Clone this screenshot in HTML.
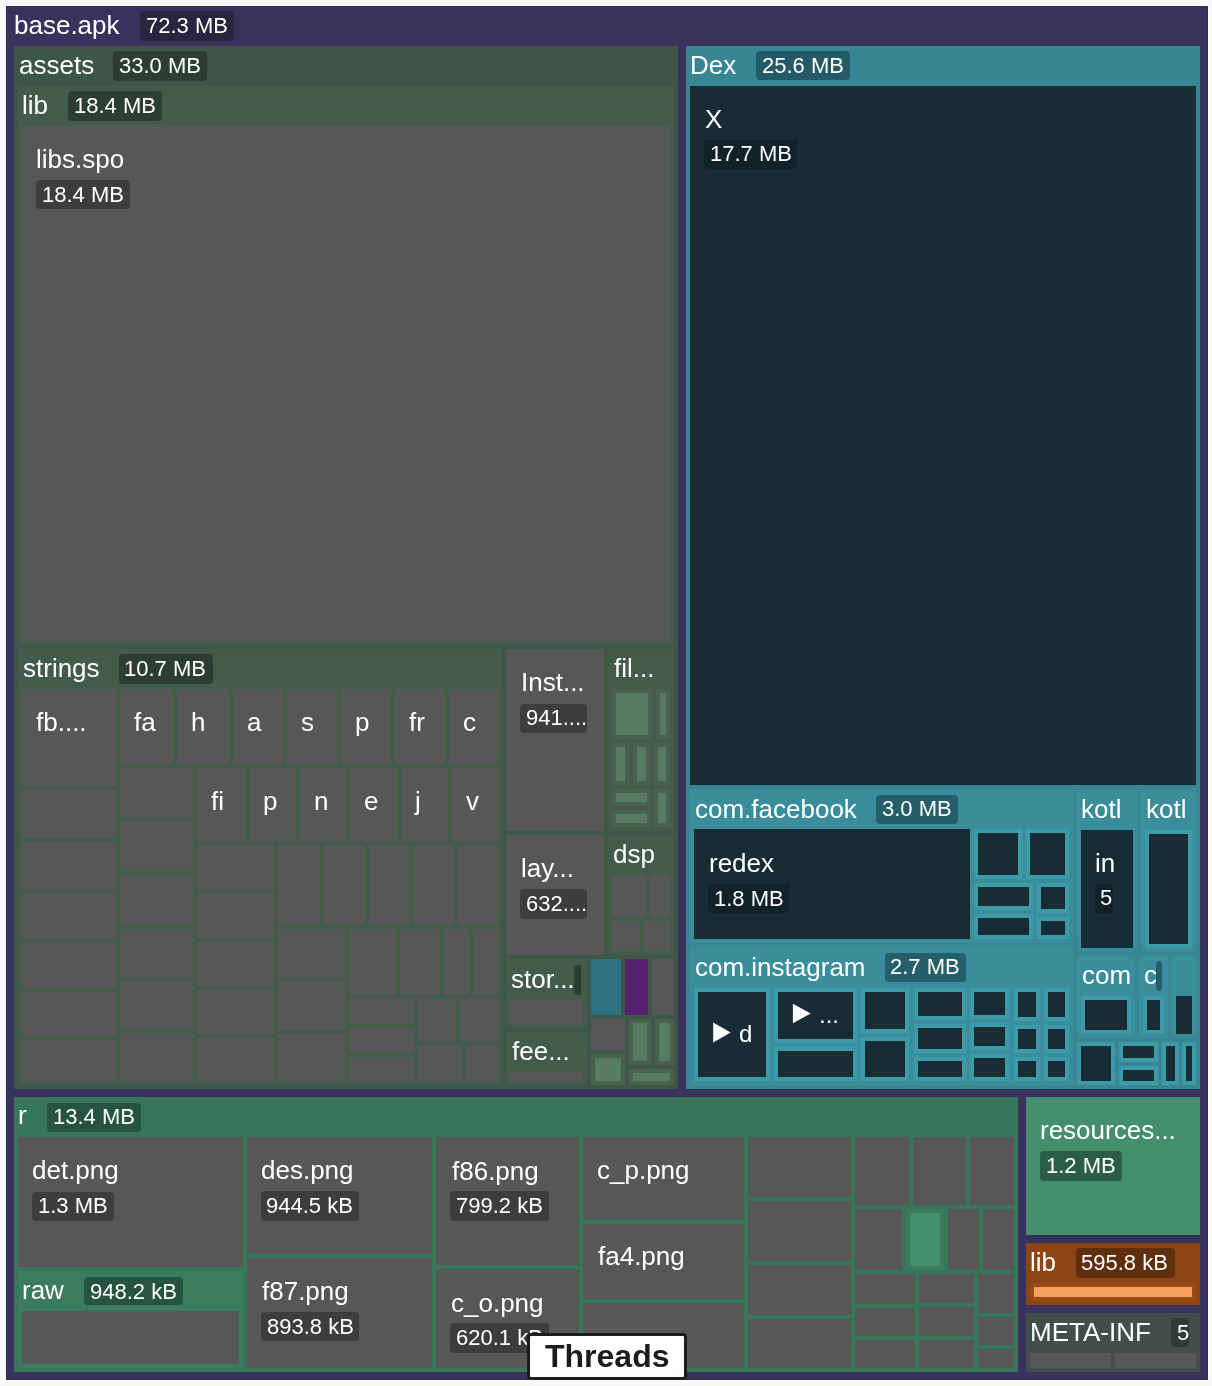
<!DOCTYPE html>
<html><head><meta charset="utf-8"><style>
html,body{margin:0;padding:0;background:#f8f9fb;width:1212px;height:1386px;overflow:hidden}
#c{position:relative;width:1212px;height:1386px}
#c div{position:absolute}
.t{position:absolute;will-change:transform;font-family:"Liberation Sans",sans-serif;color:#fff;line-height:1;white-space:nowrap}
.b{border-radius:4px;overflow:hidden}
.b span{position:absolute;will-change:transform;font-family:"Liberation Sans",sans-serif;font-size:22px;color:#fff;line-height:1;white-space:nowrap}
</style></head><body><div id="c">
<div style="left:5px;top:5px;width:1204px;height:1376px;background:#ffffff;"></div>
<div style="left:6px;top:6px;width:1202px;height:1374px;background:#2d2955;"></div>
<div style="left:7px;top:7px;width:1200px;height:1372px;background:#37335c;"></div>
<span class="t" style="left:13.97px;top:12.20px;font-size:26px">base.apk</span>
<div class="b" style="left:140px;top:11px;width:94px;height:30px;background:#29253f"><span style="left:5.5px;top:3.7px">72.3 MB</span></div>
<div style="left:14px;top:46px;width:664px;height:1043px;background:#3e5647;"></div>
<span class="t" style="left:18.80px;top:52.00px;font-size:26px">assets</span>
<div class="b" style="left:113.4px;top:51.3px;width:93.6px;height:29.4px;background:#2c3d31"><span style="left:5.5px;top:3.7px">33.0 MB</span></div>
<div style="left:18px;top:86px;width:656px;height:559px;background:#435b4b;"></div>
<span class="t" style="left:22.15px;top:91.80px;font-size:26px">lib</span>
<div class="b" style="left:68.4px;top:91.1px;width:93.6px;height:29.5px;background:#2c3d31"><span style="left:5.5px;top:3.7px">18.4 MB</span></div>
<div style="left:22px;top:126px;width:648px;height:515px;background:#575757;"></div>
<span class="t" style="left:36.05px;top:145.50px;font-size:26px">libs.spo</span>
<div class="b" style="left:36px;top:180.4px;width:93.9px;height:29.1px;background:#3d3d3d"><span style="left:5.5px;top:3.7px">18.4 MB</span></div>
<div style="left:18px;top:649px;width:484px;height:436px;background:#435b4b;"></div>
<span class="t" style="left:22.58px;top:655.10px;font-size:26px">strings</span>
<div class="b" style="left:118.9px;top:654.4px;width:93.7px;height:29.3px;background:#2c3d31"><span style="left:5.5px;top:3.7px">10.7 MB</span></div>
<div style="left:22px;top:689px;width:94px;height:97px;background:#575757;"></div>
<div style="left:22px;top:790px;width:94px;height:48px;background:#575757;"></div>
<div style="left:22px;top:842px;width:94px;height:47px;background:#575757;"></div>
<div style="left:22px;top:893px;width:94px;height:46px;background:#575757;"></div>
<div style="left:22px;top:943px;width:94px;height:45px;background:#575757;"></div>
<div style="left:22px;top:992px;width:94px;height:44px;background:#575757;"></div>
<div style="left:22px;top:1040px;width:94px;height:41px;background:#575757;"></div>
<span class="t" style="left:36.40px;top:709.00px;font-size:26px">fb....</span>
<div style="left:120px;top:689px;width:53px;height:75px;background:#575757;"></div>
<span class="t" style="left:134.40px;top:709.00px;font-size:26px">fa</span>
<div style="left:177px;top:689px;width:52px;height:75px;background:#575757;"></div>
<span class="t" style="left:191.40px;top:709.00px;font-size:26px">h</span>
<div style="left:233px;top:689px;width:50px;height:75px;background:#575757;"></div>
<span class="t" style="left:247.40px;top:709.00px;font-size:26px">a</span>
<div style="left:287px;top:689px;width:50px;height:75px;background:#575757;"></div>
<span class="t" style="left:301.40px;top:709.00px;font-size:26px">s</span>
<div style="left:341px;top:689px;width:50px;height:75px;background:#575757;"></div>
<span class="t" style="left:355.40px;top:709.00px;font-size:26px">p</span>
<div style="left:395px;top:689px;width:50px;height:75px;background:#575757;"></div>
<span class="t" style="left:409.40px;top:709.00px;font-size:26px">fr</span>
<div style="left:449px;top:689px;width:49px;height:75px;background:#575757;"></div>
<span class="t" style="left:463.40px;top:709.00px;font-size:26px">c</span>
<div style="left:120px;top:768px;width:73px;height:49px;background:#575757;"></div>
<div style="left:120px;top:821px;width:73px;height:50px;background:#575757;"></div>
<div style="left:120px;top:875px;width:73px;height:50px;background:#575757;"></div>
<div style="left:120px;top:929px;width:73px;height:48px;background:#575757;"></div>
<div style="left:120px;top:981px;width:73px;height:48px;background:#575757;"></div>
<div style="left:120px;top:1033px;width:73px;height:48px;background:#575757;"></div>
<div style="left:197px;top:768px;width:48px;height:73px;background:#575757;"></div>
<span class="t" style="left:211.40px;top:788.00px;font-size:26px">fi</span>
<div style="left:249px;top:768px;width:47px;height:73px;background:#575757;"></div>
<span class="t" style="left:263.40px;top:788.00px;font-size:26px">p</span>
<div style="left:300px;top:768px;width:46px;height:73px;background:#575757;"></div>
<span class="t" style="left:314.40px;top:788.00px;font-size:26px">n</span>
<div style="left:350px;top:768px;width:47px;height:73px;background:#575757;"></div>
<span class="t" style="left:364.40px;top:788.00px;font-size:26px">e</span>
<div style="left:401px;top:768px;width:47px;height:73px;background:#575757;"></div>
<span class="t" style="left:415.40px;top:788.00px;font-size:26px">j</span>
<div style="left:452px;top:768px;width:46px;height:73px;background:#575757;"></div>
<span class="t" style="left:466.40px;top:788.00px;font-size:26px">v</span>
<div style="left:197px;top:845px;width:77px;height:44px;background:#575757;"></div>
<div style="left:197px;top:893px;width:77px;height:45px;background:#575757;"></div>
<div style="left:197px;top:942px;width:77px;height:44px;background:#575757;"></div>
<div style="left:197px;top:990px;width:77px;height:44px;background:#575757;"></div>
<div style="left:197px;top:1038px;width:77px;height:43px;background:#575757;"></div>
<div style="left:278px;top:845px;width:42px;height:80px;background:#575757;"></div>
<div style="left:324px;top:845px;width:41px;height:80px;background:#575757;"></div>
<div style="left:369px;top:845px;width:40px;height:80px;background:#575757;"></div>
<div style="left:413px;top:845px;width:41px;height:80px;background:#575757;"></div>
<div style="left:458px;top:845px;width:40px;height:80px;background:#575757;"></div>
<div style="left:278px;top:929px;width:67px;height:48px;background:#575757;"></div>
<div style="left:278px;top:981px;width:67px;height:49px;background:#575757;"></div>
<div style="left:278px;top:1034px;width:67px;height:47px;background:#575757;"></div>
<div style="left:349px;top:929px;width:47px;height:66px;background:#575757;"></div>
<div style="left:400px;top:929px;width:40px;height:66px;background:#575757;"></div>
<div style="left:444px;top:929px;width:25px;height:66px;background:#575757;"></div>
<div style="left:473px;top:929px;width:25px;height:66px;background:#575757;"></div>
<div style="left:349px;top:999px;width:65px;height:25px;background:#575757;"></div>
<div style="left:349px;top:1028px;width:65px;height:25px;background:#575757;"></div>
<div style="left:349px;top:1057px;width:65px;height:24px;background:#575757;"></div>
<div style="left:418px;top:999px;width:38px;height:42px;background:#575757;"></div>
<div style="left:460px;top:999px;width:38px;height:42px;background:#575757;"></div>
<div style="left:418px;top:1045px;width:44px;height:36px;background:#575757;"></div>
<div style="left:466px;top:1045px;width:32px;height:36px;background:#575757;"></div>
<div style="left:506px;top:649px;width:98px;height:182px;background:#575757;"></div>
<span class="t" style="left:520.70px;top:669.10px;font-size:26px">Inst...</span>
<div class="b" style="left:520.2px;top:703.5px;width:67.1px;height:29px;background:#3d3d3d"><span style="left:5.5px;top:3.7px">941....</span></div>
<div style="left:506px;top:835px;width:98px;height:120px;background:#575757;"></div>
<span class="t" style="left:520.65px;top:855.20px;font-size:26px">lay...</span>
<div class="b" style="left:520.3px;top:889.1px;width:67px;height:29.7px;background:#3d3d3d"><span style="left:5.5px;top:3.7px">632....</span></div>
<div style="left:608px;top:649px;width:66px;height:182px;background:#435b4b;"></div>
<span class="t" style="left:613.53px;top:655.00px;font-size:26px">fil...</span>
<div style="left:612px;top:689px;width:40px;height:50px;background:#48624f;"></div>
<div style="left:616px;top:693px;width:32px;height:42px;background:#587c62;"></div>
<div style="left:656px;top:689px;width:14px;height:50px;background:#48624f;"></div>
<div style="left:660px;top:693px;width:6px;height:42px;background:#587c62;"></div>
<div style="left:612px;top:743px;width:17px;height:42px;background:#48624f;"></div>
<div style="left:616px;top:747px;width:9px;height:34px;background:#587c62;"></div>
<div style="left:633px;top:743px;width:17px;height:42px;background:#48624f;"></div>
<div style="left:637px;top:747px;width:9px;height:34px;background:#587c62;"></div>
<div style="left:654px;top:743px;width:16px;height:42px;background:#48624f;"></div>
<div style="left:658px;top:747px;width:8px;height:34px;background:#587c62;"></div>
<div style="left:612px;top:789px;width:39px;height:17px;background:#48624f;"></div>
<div style="left:616px;top:793px;width:31px;height:9px;background:#587c62;"></div>
<div style="left:612px;top:810px;width:39px;height:17px;background:#48624f;"></div>
<div style="left:616px;top:814px;width:31px;height:9px;background:#587c62;"></div>
<div style="left:654px;top:789px;width:16px;height:38px;background:#48624f;"></div>
<div style="left:658px;top:793px;width:8px;height:30px;background:#587c62;"></div>
<div style="left:608px;top:835px;width:66px;height:120px;background:#435b4b;"></div>
<span class="t" style="left:613.01px;top:841.40px;font-size:26px">dsp</span>
<div style="left:612px;top:875px;width:34px;height:42px;background:#575757;"></div>
<div style="left:650px;top:875px;width:20px;height:42px;background:#575757;"></div>
<div style="left:612px;top:921px;width:28px;height:30px;background:#575757;"></div>
<div style="left:644px;top:921px;width:26px;height:30px;background:#575757;"></div>
<div style="left:506px;top:959px;width:81px;height:69px;background:#435b4b;"></div>
<span class="t" style="left:511.18px;top:965.80px;font-size:26px">stor...</span>
<div style="left:574px;top:964.5px;width:6.5px;height:30.5px;background:#2c3d31;border-radius:3px"></div>
<div style="left:510px;top:1000px;width:73px;height:24px;background:#575757;"></div>
<div style="left:506px;top:1032px;width:81px;height:53px;background:#435b4b;"></div>
<span class="t" style="left:511.53px;top:1037.60px;font-size:26px">fee...</span>
<div style="left:510px;top:1072px;width:73px;height:9px;background:#575757;"></div>
<div style="left:591px;top:959px;width:30px;height:56px;background:#2d7282;"></div>
<div style="left:625px;top:959px;width:23px;height:56px;background:#561f6e;"></div>
<div style="left:652px;top:959px;width:22px;height:56px;background:#575757;"></div>
<div style="left:591px;top:1019px;width:34px;height:31px;background:#575757;"></div>
<div style="left:591px;top:1054px;width:34px;height:31px;background:#48624f;"></div>
<div style="left:595px;top:1058px;width:26px;height:23px;background:#587c62;"></div>
<div style="left:629px;top:1019px;width:22px;height:46px;background:#48624f;"></div>
<div style="left:633px;top:1023px;width:14px;height:38px;background:#587c62;"></div>
<div style="left:655px;top:1019px;width:19px;height:46px;background:#48624f;"></div>
<div style="left:659px;top:1023px;width:11px;height:38px;background:#587c62;"></div>
<div style="left:629px;top:1069px;width:45px;height:16px;background:#48624f;"></div>
<div style="left:633px;top:1073px;width:37px;height:8px;background:#587c62;"></div>
<div style="left:686px;top:46px;width:514px;height:1043px;background:#388593;"></div>
<span class="t" style="left:689.97px;top:52.20px;font-size:26px">Dex</span>
<div class="b" style="left:756.2px;top:51.2px;width:94.1px;height:29.2px;background:#245a66"><span style="left:5.5px;top:3.7px">25.6 MB</span></div>
<div style="left:690px;top:86px;width:506px;height:699px;background:#172d33;"></div>
<span class="t" style="left:705.12px;top:106.30px;font-size:26px">X</span>
<div class="b" style="left:704.4px;top:139.8px;width:93.6px;height:29.7px;background:#112228"><span style="left:5.5px;top:3.7px">17.7 MB</span></div>
<div style="left:690px;top:789px;width:383px;height:154px;background:#3a8d9b;"></div>
<span class="t" style="left:694.70px;top:796.20px;font-size:26px">com.facebook</span>
<div class="b" style="left:876.2px;top:794.5px;width:81.5px;height:29.7px;background:#245f6b"><span style="left:5.5px;top:3.7px">3.0 MB</span></div>
<div style="left:694px;top:829px;width:276px;height:110px;background:#172d33;"></div>
<span class="t" style="left:708.57px;top:850.00px;font-size:26px">redex</span>
<div class="b" style="left:708px;top:883.9px;width:81.7px;height:28.8px;background:#112228"><span style="left:5.5px;top:3.7px">1.8 MB</span></div>
<div style="left:974px;top:829px;width:48px;height:50px;background:#3d9aa8;"></div>
<div style="left:978px;top:833px;width:40px;height:42px;background:#172d33;"></div>
<div style="left:1026px;top:829px;width:43px;height:50px;background:#3d9aa8;"></div>
<div style="left:1030px;top:833px;width:35px;height:42px;background:#172d33;"></div>
<div style="left:974px;top:883px;width:59px;height:27px;background:#3d9aa8;"></div>
<div style="left:978px;top:887px;width:51px;height:19px;background:#172d33;"></div>
<div style="left:1037px;top:883px;width:32px;height:30px;background:#3d9aa8;"></div>
<div style="left:1041px;top:887px;width:24px;height:22px;background:#172d33;"></div>
<div style="left:974px;top:914px;width:59px;height:25px;background:#3d9aa8;"></div>
<div style="left:978px;top:918px;width:51px;height:17px;background:#172d33;"></div>
<div style="left:1037px;top:917px;width:32px;height:22px;background:#3d9aa8;"></div>
<div style="left:1041px;top:921px;width:24px;height:14px;background:#172d33;"></div>
<div style="left:1077px;top:789px;width:60px;height:162px;background:#3a8d9b;"></div>
<span class="t" style="left:1081.05px;top:795.60px;font-size:26px">kotl</span>
<div style="left:1081px;top:830px;width:52px;height:118px;background:#172d33;"></div>
<span class="t" style="left:1094.86px;top:849.70px;font-size:26px">in</span>
<div class="b" style="left:1094.9px;top:883.8px;width:18.1px;height:29.1px;background:#112228"><span style="left:5.5px;top:3.7px">5</span></div>
<div style="left:1141px;top:789px;width:55px;height:162px;background:#3a8d9b;"></div>
<span class="t" style="left:1145.85px;top:795.60px;font-size:26px">kotl</span>
<div style="left:1145px;top:830px;width:47px;height:118px;background:#3d9aa8;"></div>
<div style="left:1149px;top:834px;width:39px;height:110px;background:#172d33;"></div>
<div style="left:690px;top:947px;width:383px;height:138px;background:#3a8d9b;"></div>
<span class="t" style="left:694.70px;top:953.90px;font-size:26px">com.instagram</span>
<div class="b" style="left:884.7px;top:952.7px;width:81.6px;height:29.4px;background:#245f6b"><span style="left:5.5px;top:3.7px">2.7 MB</span></div>
<div style="left:694px;top:988px;width:76px;height:93px;background:#3d9aa8;"></div>
<div style="left:698px;top:992px;width:68px;height:85px;background:#172d33;"></div>
<div style="left:774px;top:988px;width:83px;height:55px;background:#3d9aa8;"></div>
<div style="left:778px;top:992px;width:75px;height:47px;background:#172d33;"></div>
<div style="left:774px;top:1047px;width:83px;height:34px;background:#3d9aa8;"></div>
<div style="left:778px;top:1051px;width:75px;height:26px;background:#172d33;"></div>
<div style="left:861px;top:988px;width:48px;height:45px;background:#3d9aa8;"></div>
<div style="left:865px;top:992px;width:40px;height:37px;background:#172d33;"></div>
<div style="left:861px;top:1037px;width:48px;height:44px;background:#3d9aa8;"></div>
<div style="left:865px;top:1041px;width:40px;height:36px;background:#172d33;"></div>
<div style="left:914px;top:988px;width:52px;height:32px;background:#3d9aa8;"></div>
<div style="left:918px;top:992px;width:44px;height:24px;background:#172d33;"></div>
<div style="left:914px;top:1024px;width:52px;height:29px;background:#3d9aa8;"></div>
<div style="left:918px;top:1028px;width:44px;height:21px;background:#172d33;"></div>
<div style="left:914px;top:1057px;width:52px;height:24px;background:#3d9aa8;"></div>
<div style="left:918px;top:1061px;width:44px;height:16px;background:#172d33;"></div>
<div style="left:970px;top:988px;width:39px;height:31px;background:#3d9aa8;"></div>
<div style="left:974px;top:992px;width:31px;height:23px;background:#172d33;"></div>
<div style="left:970px;top:1023px;width:39px;height:27px;background:#3d9aa8;"></div>
<div style="left:974px;top:1027px;width:31px;height:19px;background:#172d33;"></div>
<div style="left:970px;top:1054px;width:39px;height:27px;background:#3d9aa8;"></div>
<div style="left:974px;top:1058px;width:31px;height:19px;background:#172d33;"></div>
<div style="left:1014px;top:988px;width:26px;height:33px;background:#3d9aa8;"></div>
<div style="left:1018px;top:992px;width:18px;height:25px;background:#172d33;"></div>
<div style="left:1044px;top:988px;width:25px;height:33px;background:#3d9aa8;"></div>
<div style="left:1048px;top:992px;width:17px;height:25px;background:#172d33;"></div>
<div style="left:1014px;top:1025px;width:26px;height:28px;background:#3d9aa8;"></div>
<div style="left:1018px;top:1029px;width:18px;height:20px;background:#172d33;"></div>
<div style="left:1044px;top:1025px;width:25px;height:28px;background:#3d9aa8;"></div>
<div style="left:1048px;top:1029px;width:17px;height:20px;background:#172d33;"></div>
<div style="left:1014px;top:1057px;width:26px;height:24px;background:#3d9aa8;"></div>
<div style="left:1018px;top:1061px;width:18px;height:16px;background:#172d33;"></div>
<div style="left:1044px;top:1057px;width:25px;height:24px;background:#3d9aa8;"></div>
<div style="left:1048px;top:1061px;width:17px;height:16px;background:#172d33;"></div>
<svg style="position:absolute;left:0;top:0" width="1212" height="1386"><polygon points="713.2,1022.5 730.7,1032.5 713.2,1042.5" fill="#fff"/><polygon points="792.9,1003.8 810.7,1013.5 792.9,1023.3" fill="#fff"/></svg>
<span class="t" style="left:738.89px;top:1022.10px;font-size:24px">d</span>
<span class="t" style="left:818.51px;top:1003.30px;font-size:24px">...</span>
<div style="left:1077px;top:956px;width:58px;height:82px;background:#3a8d9b;"></div>
<span class="t" style="left:1081.50px;top:961.80px;font-size:26px">com</span>
<div style="left:1081px;top:996px;width:50px;height:38px;background:#3d9aa8;"></div>
<div style="left:1085px;top:1000px;width:42px;height:30px;background:#172d33;"></div>
<div style="left:1139px;top:956px;width:29px;height:82px;background:#3a8d9b;"></div>
<span class="t" style="left:1143.70px;top:962.00px;font-size:26px">c</span>
<div style="left:1156.3px;top:961.2px;width:5.4px;height:29.8px;background:#255e6a;border-radius:3px"></div>
<div style="left:1143px;top:996px;width:21px;height:38px;background:#3d9aa8;"></div>
<div style="left:1147px;top:1000px;width:13px;height:30px;background:#172d33;"></div>
<div style="left:1172px;top:956px;width:24px;height:82px;background:#3a8d9b;"></div>
<div style="left:1176px;top:996px;width:16px;height:38px;background:#172d33;"></div>
<div style="left:1077px;top:1042px;width:38px;height:43px;background:#3d9aa8;"></div>
<div style="left:1081px;top:1046px;width:30px;height:35px;background:#172d33;"></div>
<div style="left:1119px;top:1042px;width:39px;height:20px;background:#3d9aa8;"></div>
<div style="left:1123px;top:1046px;width:31px;height:12px;background:#172d33;"></div>
<div style="left:1119px;top:1066px;width:39px;height:19px;background:#3d9aa8;"></div>
<div style="left:1123px;top:1070px;width:31px;height:11px;background:#172d33;"></div>
<div style="left:1162px;top:1042px;width:17px;height:43px;background:#3d9aa8;"></div>
<div style="left:1166px;top:1046px;width:9px;height:35px;background:#172d33;"></div>
<div style="left:1182px;top:1042px;width:14px;height:43px;background:#3d9aa8;"></div>
<div style="left:1186px;top:1046px;width:6px;height:35px;background:#172d33;"></div>
<div style="left:14px;top:1097px;width:1004px;height:275px;background:#37765a;"></div>
<span class="t" style="left:17.97px;top:1101.90px;font-size:26px">r</span>
<div class="b" style="left:47px;top:1102.6px;width:93.8px;height:29.2px;background:#265440"><span style="left:5.5px;top:3.7px">13.4 MB</span></div>
<div style="left:18px;top:1137px;width:225px;height:130px;background:#575757;"></div>
<span class="t" style="left:32.41px;top:1156.90px;font-size:26px">det.png</span>
<div class="b" style="left:32px;top:1191.5px;width:82px;height:29.3px;background:#3d3d3d"><span style="left:5.5px;top:3.7px">1.3 MB</span></div>
<div style="left:18px;top:1271px;width:225px;height:97px;background:#3b7b5e;"></div>
<span class="t" style="left:22.17px;top:1277.20px;font-size:26px">raw</span>
<div class="b" style="left:84.3px;top:1276.9px;width:98.3px;height:28.6px;background:#265440"><span style="left:5.5px;top:3.7px">948.2 kB</span></div>
<div style="left:22px;top:1311px;width:217px;height:53px;background:#575757;"></div>
<div style="left:247px;top:1137px;width:185px;height:117px;background:#575757;"></div>
<span class="t" style="left:261.11px;top:1157.10px;font-size:26px">des.png</span>
<div class="b" style="left:260.8px;top:1191.3px;width:98.6px;height:29.6px;background:#3d3d3d"><span style="left:5.5px;top:3.7px">944.5 kB</span></div>
<div style="left:247px;top:1258px;width:185px;height:110px;background:#575757;"></div>
<span class="t" style="left:261.83px;top:1278.00px;font-size:26px">f87.png</span>
<div class="b" style="left:261px;top:1312.2px;width:98.4px;height:29.1px;background:#3d3d3d"><span style="left:5.5px;top:3.7px">893.8 kB</span></div>
<div style="left:436px;top:1137px;width:143px;height:128px;background:#575757;"></div>
<span class="t" style="left:451.73px;top:1157.60px;font-size:26px">f86.png</span>
<div class="b" style="left:450.4px;top:1191.3px;width:98.8px;height:29.4px;background:#3d3d3d"><span style="left:5.5px;top:3.7px">799.2 kB</span></div>
<div style="left:436px;top:1269px;width:143px;height:99px;background:#575757;"></div>
<span class="t" style="left:450.80px;top:1289.90px;font-size:26px">c_o.png</span>
<div class="b" style="left:450.4px;top:1323.3px;width:98.8px;height:29.4px;background:#3d3d3d"><span style="left:5.5px;top:3.7px">620.1 kB</span></div>
<div style="left:583px;top:1137px;width:161px;height:83px;background:#575757;"></div>
<span class="t" style="left:597.20px;top:1157.00px;font-size:26px">c_p.png</span>
<div style="left:583px;top:1224px;width:161px;height:75px;background:#575757;"></div>
<span class="t" style="left:597.93px;top:1242.80px;font-size:26px">fa4.png</span>
<div style="left:583px;top:1303px;width:161px;height:65px;background:#575757;"></div>
<div style="left:748px;top:1137px;width:103px;height:60px;background:#575757;"></div>
<div style="left:748px;top:1201px;width:103px;height:60px;background:#575757;"></div>
<div style="left:748px;top:1265px;width:103px;height:50px;background:#575757;"></div>
<div style="left:748px;top:1319px;width:103px;height:49px;background:#575757;"></div>
<div style="left:855px;top:1137px;width:54px;height:68px;background:#575757;"></div>
<div style="left:913px;top:1137px;width:53px;height:68px;background:#575757;"></div>
<div style="left:970px;top:1137px;width:44px;height:68px;background:#575757;"></div>
<div style="left:855px;top:1209px;width:47px;height:61px;background:#575757;"></div>
<div style="left:906px;top:1209px;width:38px;height:61px;background:#3a7b5e;"></div>
<div style="left:910px;top:1213px;width:30px;height:53px;background:#44906e;"></div>
<div style="left:948px;top:1209px;width:31px;height:61px;background:#575757;"></div>
<div style="left:983px;top:1209px;width:31px;height:61px;background:#575757;"></div>
<div style="left:855px;top:1274px;width:60px;height:30px;background:#575757;"></div>
<div style="left:855px;top:1308px;width:60px;height:28px;background:#575757;"></div>
<div style="left:855px;top:1340px;width:60px;height:28px;background:#575757;"></div>
<div style="left:919px;top:1274px;width:55px;height:29px;background:#575757;"></div>
<div style="left:919px;top:1307px;width:55px;height:29px;background:#575757;"></div>
<div style="left:919px;top:1340px;width:55px;height:28px;background:#575757;"></div>
<div style="left:978px;top:1274px;width:36px;height:39px;background:#575757;"></div>
<div style="left:978px;top:1317px;width:36px;height:28px;background:#575757;"></div>
<div style="left:978px;top:1349px;width:36px;height:19px;background:#575757;"></div>
<div style="left:1026px;top:1097px;width:174px;height:138px;background:#448e6e;"></div>
<span class="t" style="left:1039.77px;top:1116.70px;font-size:26px">resources...</span>
<div class="b" style="left:1040px;top:1151.3px;width:81.8px;height:29.5px;background:#2b5e47"><span style="left:5.5px;top:3.7px">1.2 MB</span></div>
<div style="left:1026px;top:1243px;width:174px;height:62px;background:#8d4514;"></div>
<span class="t" style="left:1029.55px;top:1249.20px;font-size:26px">lib</span>
<div class="b" style="left:1075.9px;top:1248.1px;width:98.9px;height:29.9px;background:#5e2e0e"><span style="left:5.5px;top:3.7px">595.8 kB</span></div>
<div style="left:1030px;top:1283px;width:166px;height:18px;background:#9a4a16;"></div>
<div style="left:1034px;top:1287px;width:158px;height:10px;background:#f4a05c;"></div>
<div style="left:1026px;top:1313px;width:174px;height:59px;background:#414e4b;"></div>
<span class="t" style="left:1029.77px;top:1319.10px;font-size:26px">META-INF</span>
<div class="b" style="left:1171px;top:1318.2px;width:18.1px;height:29.3px;background:#2f3b38"><span style="left:5.5px;top:3.7px">5</span></div>
<div style="left:1030px;top:1353px;width:81px;height:15px;background:#575757;"></div>
<div style="left:1115px;top:1353px;width:81px;height:15px;background:#575757;"></div>
<div style="left:527px;top:1333px;width:160px;height:47px;background:#fff;border:3px solid #1d1d1d;box-sizing:border-box;border-radius:4px"></div>
<span class="t" style="left:544.84px;top:1340.00px;font-size:32px;font-weight:bold;color:#1c1c1c">Threads</span>
</div></body></html>
